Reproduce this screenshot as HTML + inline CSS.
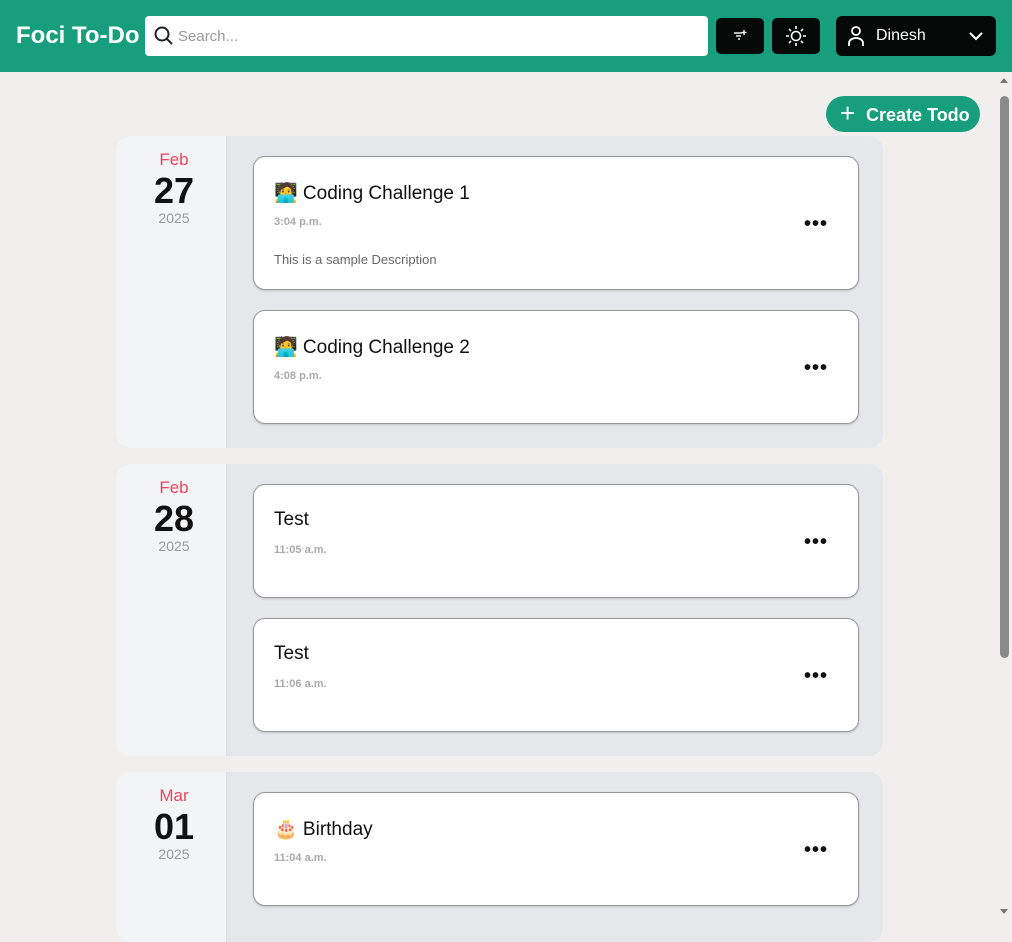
<html><head><style>
body{margin:0;width:1012px;height:920px;overflow:hidden;background:#f0efed;font-family:"Liberation Sans",sans-serif;position:relative}
.hd{position:absolute;left:0;top:0;width:1012px;height:72px;background:#169e7d}
.logo{position:absolute;left:16px;top:22px;color:#fff;font-weight:bold;font-size:24px}
.search{position:absolute;left:145px;top:16px;width:563px;height:40px;background:#fff;border-radius:4px}
.search span{position:absolute;left:33px;top:12px;color:#999;font-size:15px}
.btn{position:absolute;top:18px;width:48px;height:36px;background:#050a08;border-radius:5px}
.user{position:absolute;left:836px;top:16px;width:160px;height:40px;background:#050a08;border-radius:6px;color:#fff;font-size:16px}
.ct{position:absolute;left:826px;top:96px;width:154px;height:36px;background:#169e7d;border-radius:18px;color:#fff;font-size:18px;font-weight:bold}
.sb{position:absolute;left:997px;top:72px;width:15px;height:848px;background:#f0efed}
.th{position:absolute;left:3px;top:24px;width:9px;height:562px;background:#8a8a8a;border-radius:5px}
.g{position:absolute;left:116px;width:767px;background:#e5e7eb;border-radius:14px;overflow:hidden}
.dc{position:absolute;left:0;top:0;bottom:0;width:104px;padding-left:6px;background:#f3f4f6;text-align:center;border-radius:14px 0 0 14px;box-shadow:1px 0 1px #ddd}
.m{color:#e9455f;font-size:17px;margin-top:14px}
.d{font-size:36px;font-weight:bold;color:#111;line-height:38px;margin-top:2px}
.y{color:#999;font-size:14px}
.c{position:absolute;left:253px;width:604px;background:#fff;border:1px solid #999;border-radius:12px;box-shadow:0 1px 2px rgba(0,0,0,.15)}
.t{position:absolute;left:20px;top:24px;font-size:19px;color:#111}
.tm{position:absolute;left:20px;top:59px;font-size:11px;color:#aaa;font-weight:bold}
.ds{position:absolute;left:20px;top:95px;font-size:13px;color:#666}
.dots{position:absolute;right:30px;font-size:20px;font-weight:bold;letter-spacing:1px;color:#111;line-height:10px}
</style></head><body>
<div class="hd">
<div class="logo">Foci To-Do</div>
<div class="search"><svg style="position:absolute;left:9px;top:10px" width="20" height="20" viewBox="0 0 20 20"><circle cx="8" cy="8" r="6.5" fill="none" stroke="#222" stroke-width="2"/><line x1="13" y1="13" x2="18" y2="18" stroke="#222" stroke-width="2"/></svg><span>Search...</span></div>
<div class="btn" style="left:716px"><svg style="position:absolute;left:16px;top:10px" width="16" height="16" viewBox="0 0 16 16" stroke="#fff" stroke-width="1.4"><line x1="2" y1="5" x2="10" y2="5"/><line x1="4" y1="8" x2="9" y2="8"/><line x1="6" y1="11" x2="8" y2="11"/><line x1="12" y1="2" x2="12" y2="7"/><line x1="9.5" y1="4.5" x2="14.5" y2="4.5"/></svg></div>
<div class="btn" style="left:772px"><svg style="position:absolute;left:13px;top:7px" width="22" height="22" viewBox="0 0 22 22" stroke="#fff" stroke-width="1.6" fill="none"><circle cx="11" cy="11" r="4.5"/><path d="M11 1v3M11 18v3M1 11h3M18 11h3M4 4l2 2M16 16l2 2M4 18l2-2M16 6l2-2"/></svg></div>
<div class="user"><svg style="position:absolute;left:11px;top:9px" width="18" height="22" viewBox="0 0 18 22" stroke="#fff" stroke-width="1.8" fill="none"><circle cx="9" cy="6" r="4"/><path d="M2 21v-3a7 5 0 0 1 14 0v3"/></svg><span style="position:absolute;left:40px;top:11px">Dinesh</span><svg style="position:absolute;left:132px;top:14px" width="16" height="12" viewBox="0 0 16 12" stroke="#fff" stroke-width="2" fill="none"><path d="M2 3l6 6 6-6"/></svg></div>
</div>
<div class="sb"><div class="th"></div><div style="position:absolute;left:3px;top:6px;border:4px solid transparent;border-bottom:5px solid #777;border-top:0"></div><div style="position:absolute;left:3px;bottom:6px;border:4px solid transparent;border-top:5px solid #777;border-bottom:0"></div></div>
<div class="ct"><span style="position:absolute;left:14px;top:3px;font-size:26px;font-weight:normal;line-height:28px">+</span><span style="position:absolute;left:40px;top:9px">Create Todo</span></div>

<div class="g" style="top:136px;height:312px"><div class="dc"><div class="m">Feb</div><div class="d">27</div><div class="y">2025</div></div></div>
<div class="c" style="top:156px;height:132px"><div class="t">🧑‍💻 Coding Challenge 1</div><div class="tm">3:04 p.m.</div><div class="ds">This is a sample Description</div><div class="dots" style="top:62px">•••</div></div>
<div class="c" style="top:310px;height:112px"><div class="t">🧑‍💻 Coding Challenge 2</div><div class="tm">4:08 p.m.</div><div class="dots" style="top:52px">•••</div></div>

<div class="g" style="top:464px;height:292px"><div class="dc"><div class="m">Feb</div><div class="d">28</div><div class="y">2025</div></div></div>
<div class="c" style="top:484px;height:112px"><div class="t">Test</div><div class="tm">11:05 a.m.</div><div class="dots" style="top:52px">•••</div></div>
<div class="c" style="top:618px;height:112px"><div class="t">Test</div><div class="tm">11:06 a.m.</div><div class="dots" style="top:52px">•••</div></div>

<div class="g" style="top:772px;height:170px"><div class="dc"><div class="m">Mar</div><div class="d">01</div><div class="y">2025</div></div></div>
<div class="c" style="top:792px;height:112px"><div class="t">🎂 Birthday</div><div class="tm">11:04 a.m.</div><div class="dots" style="top:52px">•••</div></div>
</body></html>
